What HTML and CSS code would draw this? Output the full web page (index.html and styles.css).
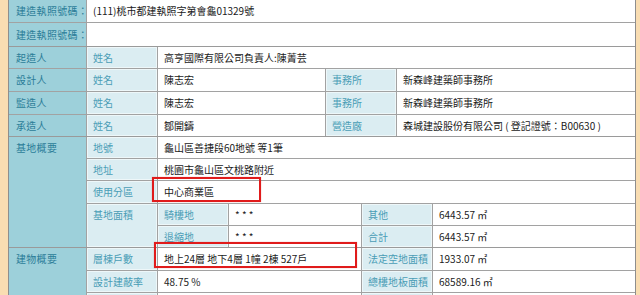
FILE: index.html
```html
<!DOCTYPE html>
<html lang="zh-Hant">
<head>
<meta charset="utf-8">
<title>建造執照</title>
<link rel="stylesheet" href="styles.css">
</head>
<body>
<div class="sheet">
  <div class="sec sec1">
    <div class="hd c">建造執照號碼：</div>
    <div class="val">(111)桃市都建執照字第會龜01329號</div>
    <div class="hd c">建造執照號碼：</div>
    <div class="val"></div>
  </div>
  <div class="sec sec2">
    <div class="hd c">起造人</div>
    <div class="lb">姓名</div>
    <div class="val s3">高亨國際有限公司負責人:陳菁芸</div>
    <div class="hd c">設計人</div>
    <div class="lb">姓名</div>
    <div class="val">陳志宏</div>
    <div class="lb">事務所</div>
    <div class="val">新森峰建築師事務所</div>
    <div class="hd c">監造人</div>
    <div class="lb">姓名</div>
    <div class="val">陳志宏</div>
    <div class="lb">事務所</div>
    <div class="val">新森峰建築師事務所</div>
    <div class="hd c">承造人</div>
    <div class="lb">姓名</div>
    <div class="val">鄒開鑄</div>
    <div class="lb">營造廠</div>
    <div class="val">森城建設股份有限公司 ( 登記證號：B00630 )</div>
  </div>
  <div class="sec sec3">
    <div class="hd top r5">基地概要</div>
    <div class="lb">地號</div>
    <div class="val s4">龜山區善捷段60地號 等1筆</div>
    <div class="lb">地址</div>
    <div class="val s4">桃園市龜山區文桃路附近</div>
    <div class="lb">使用分區</div>
    <div class="val s4">中心商業區</div>
    <div class="lb top r2">基地面積</div>
    <div class="lb">騎樓地</div>
    <div class="val">* * *</div>
    <div class="lb">其他</div>
    <div class="val">6443.57 ㎡</div>
    <div class="lb">退縮地</div>
    <div class="val">* * *</div>
    <div class="lb">合計</div>
    <div class="val">6443.57 ㎡</div>
  </div>
  <div class="sec sec4">
    <div class="hd top r3">建物概要</div>
    <div class="lb">層棟戶數</div>
    <div class="val s2">地上24層 地下4層 1幢 2棟 527戶</div>
    <div class="lb">法定空地面積</div>
    <div class="val">1933.07 ㎡</div>
    <div class="lb">設計建蔽率</div>
    <div class="val s2">48.75 %</div>
    <div class="lb">總樓地板面積</div>
    <div class="val">68589.16 ㎡</div>
    <div class="lb"></div>
    <div class="val s2"></div>
    <div class="lb"></div>
    <div class="val"></div>
  </div>
  <div class="mark mark1"></div>
  <div class="mark mark2"></div>
</div>
</body>
</html>
```
FILE: styles.css
```css
html, body {
  margin: 0;
  padding: 0;
  background: #f9ddb2;
  overflow: hidden;
}
body {
  font-family: "Noto Sans CJK TC", "Noto Sans", "Liberation Sans", sans-serif;
  font-size: 10px;
  color: #222;
}
.sheet {
  position: relative;
  margin-left: 8px;
  width: 628px;
  height: 295px;
  overflow: hidden;
  background: #9a9a9a;
  box-sizing: border-box;
  border-left: 1px solid #8e8e8e;
  border-right: 1px solid #8e8e8e;
  display: flex;
  flex-direction: column;
  gap: 1px;
}
.sec {
  display: grid;
  gap: 1px;
  background: #a2a2a2;
  flex: none;
}
.sec1 {
  grid-template-columns: 77px 1fr;
  grid-template-rows: 22px 23px;
}
.sec2 {
  grid-template-columns: 77px 70px 167px 70px 1fr;
  grid-template-rows: 21px 22px 22px 21px;
}
.sec3 {
  grid-template-columns: 77px 70px 70px 132px 70px 1fr;
  grid-template-rows: 21px 21px 22px 21px 21px;
}
.sec4 {
  grid-template-columns: 77px 70px 70px 132px 70px 1fr;
  grid-template-rows: 22px 21px 21px;
}
.sec > div {
  display: flex;
  align-items: center;
  padding: 0 6px;
  white-space: nowrap;
  line-height: 14px;
}
.hd {
  background: #9dd0da;
  color: #2b7d98;
  padding-left: 7px !important;
  letter-spacing: 0.3px;
}
.lb {
  background: #dbedf2;
  color: #4a9db6;
  box-shadow: inset 0 0 0 1px #eef7f9;
}
.val {
  background: #fff;
  color: #1a1a1a;
}
.sec > .top {
  align-items: flex-start;
  padding-top: 4px;
}
.r2 { grid-row: span 2; }
.r3 { grid-row: span 3; }
.r5 { grid-row: span 5; }
.s2 { grid-column: span 2; }
.s3 { grid-column: span 3; }
.s4 { grid-column: span 4; }
.mark {
  position: absolute;
  border: 2px solid #e01b1b;
  box-shadow: 0 0 1px rgba(200, 0, 0, 0.4);
  pointer-events: none;
}
.mark1 {
  left: 143px;
  top: 177px;
  width: 105px;
  height: 21px;
}
.mark2 {
  left: 145px;
  top: 242px;
  width: 199px;
  height: 22px;
}
```
